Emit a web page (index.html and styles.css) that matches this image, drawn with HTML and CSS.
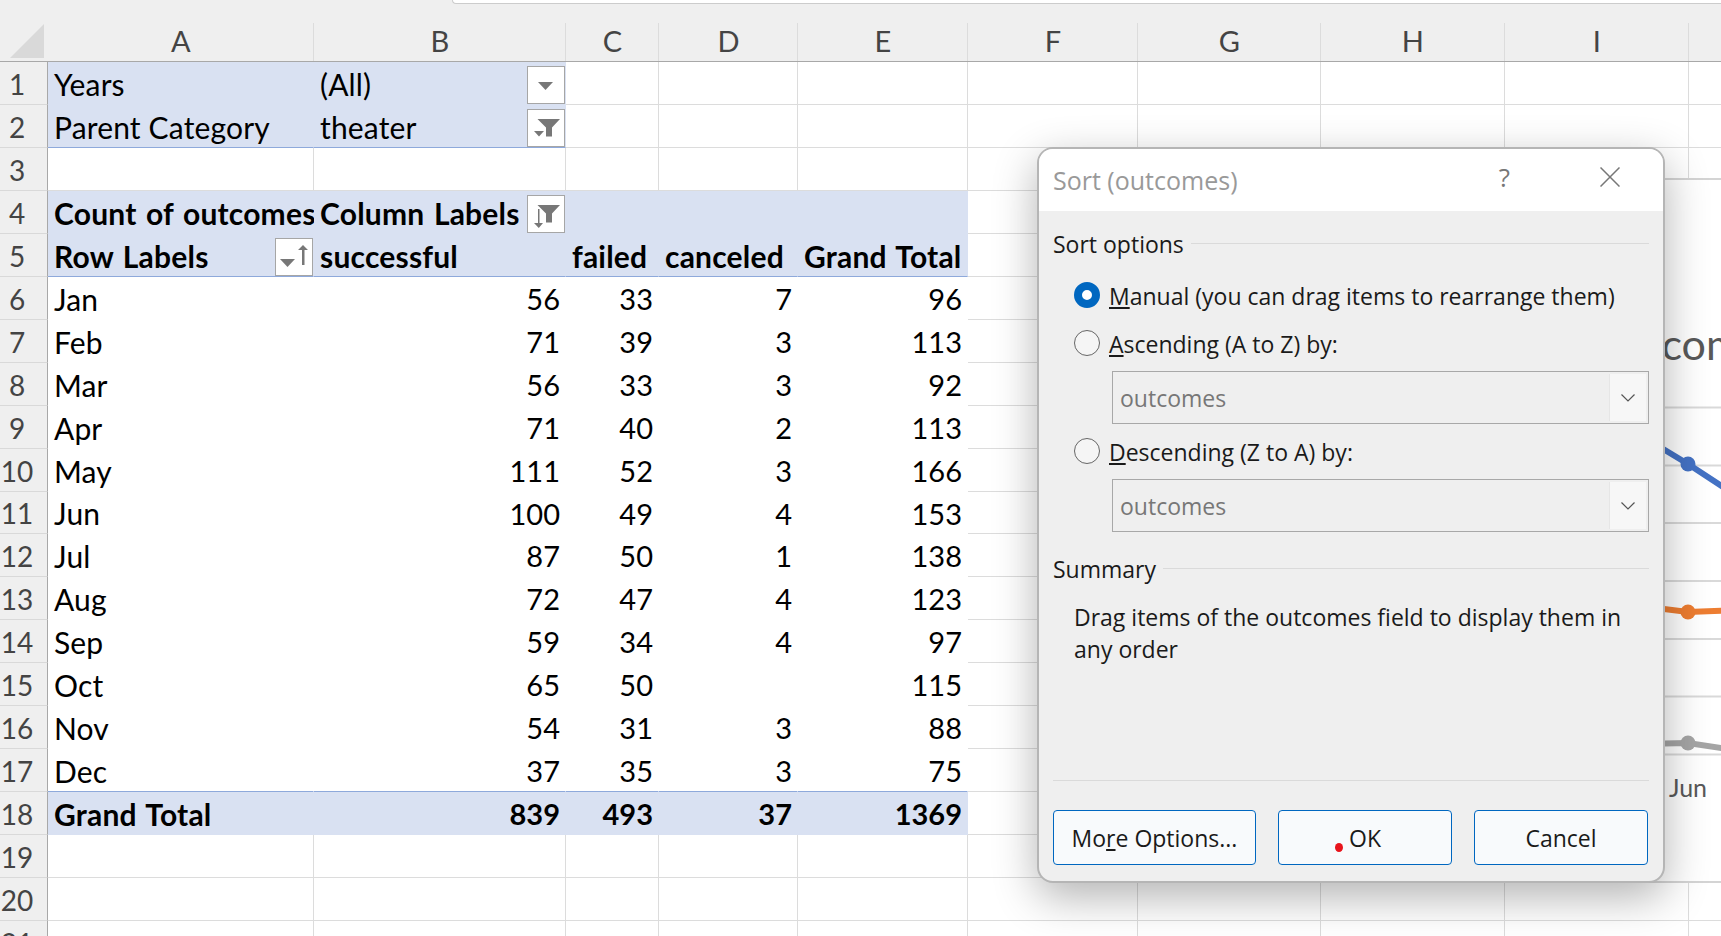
FILE: index.html
```html
<!DOCTYPE html>
<html>
<head>
    <meta charset="UTF-8">
    <title>Sort (outcomes)</title>
    <link rel="stylesheet" href="styles.css">
</head>
<body>
<div class="topbar"><div class="formula-edge"></div></div>

<table class="sheet">
    <colgroup>
        <col class="c-row"><col class="c-a"><col class="c-b"><col class="c-c"><col class="c-d"><col class="c-e">
        <col class="c-f"><col class="c-g"><col class="c-h"><col class="c-i"><col class="c-j">
    </colgroup>
    <thead>
    <tr>
        <th class="corner"><div class="corner-mark"></div></th>
        <th>A</th><th>B</th><th>C</th><th>D</th><th>E</th><th>F</th><th>G</th><th>H</th><th>I</th><th></th>
    </tr>
    </thead>
    <tbody>
    <tr>
        <th>1</th>
        <td class="pv">Years</td>
        <td class="pv has-btn">(All)
            <span class="fbtn">
                <svg width="36" height="36" viewBox="0 0 36 36"><path class="ico" d="M10 15h15l-7.500 8z"/></svg>
            </span>
        </td>
        <td></td><td></td><td></td><td></td><td></td><td></td><td></td><td></td>
    </tr>
    <tr>
        <th>2</th>
        <td class="pv line">Parent Category</td>
        <td class="pv line has-btn">theater
            <span class="fbtn">
                <svg width="36" height="36" viewBox="0 0 36 36"><path class="ico" d="M9.500 9H32l-8 8.500v9h-6v-9zM6 21h10l-5 5.500z"/></svg>
            </span>
        </td>
        <td></td><td></td><td></td><td></td><td></td><td></td><td></td><td></td>
    </tr>
    <tr>
        <th>3</th>
        <td></td><td></td><td></td><td></td><td></td><td></td><td></td><td></td><td></td><td></td>
    </tr>
    <tr>
        <th>4</th>
        <td class="pv b">Count of outcomes</td>
        <td class="pv b has-btn">Column Labels
            <span class="fbtn">
                <svg width="36" height="36" viewBox="0 0 36 36"><path class="ico" d="M9.500 9H32l-8 8.500v9h-6v-9z"/><path class="ico" d="M10 13h1.500v14H15l-4.200 5-4.800-5h4z"/></svg>
            </span>
        </td>
        <td class="pv"></td><td class="pv"></td><td class="pv"></td>
        <td></td><td></td><td></td><td></td><td></td>
    </tr>
    <tr>
        <th>5</th>
        <td class="pv line b has-btn">Row Labels
            <span class="fbtn">
                <svg width="36" height="36" viewBox="0 0 36 36"><path class="ico" d="M4 20h15l-7.500 8z"/><path class="ico" d="M26 26V11h-4l5-5 5 5h-3.500v15z"/></svg>
            </span>
        </td>
        <td class="pv line b">successful</td>
        <td class="pv line b">failed</td>
        <td class="pv line b">canceled</td>
        <td class="pv line b">Grand Total</td>
        <td></td><td></td><td></td><td></td><td></td>
    </tr>
    <tr><th>6</th><td class="pl">Jan</td><td class="pl num">56</td><td class="pl num">33</td><td class="pl num">7</td><td class="pl num">96</td><td></td><td></td><td></td><td></td><td></td></tr>
    <tr><th>7</th><td class="pl">Feb</td><td class="pl num">71</td><td class="pl num">39</td><td class="pl num">3</td><td class="pl num">113</td><td></td><td></td><td></td><td></td><td></td></tr>
    <tr><th>8</th><td class="pl">Mar</td><td class="pl num">56</td><td class="pl num">33</td><td class="pl num">3</td><td class="pl num">92</td><td></td><td></td><td></td><td></td><td></td></tr>
    <tr><th>9</th><td class="pl">Apr</td><td class="pl num">71</td><td class="pl num">40</td><td class="pl num">2</td><td class="pl num">113</td><td></td><td></td><td></td><td></td><td></td></tr>
    <tr><th>10</th><td class="pl">May</td><td class="pl num">111</td><td class="pl num">52</td><td class="pl num">3</td><td class="pl num">166</td><td></td><td></td><td></td><td></td><td></td></tr>
    <tr class="short"><th>11</th><td class="pl">Jun</td><td class="pl num">100</td><td class="pl num">49</td><td class="pl num">4</td><td class="pl num">153</td><td></td><td></td><td></td><td></td><td></td></tr>
    <tr><th>12</th><td class="pl">Jul</td><td class="pl num">87</td><td class="pl num">50</td><td class="pl num">1</td><td class="pl num">138</td><td></td><td></td><td></td><td></td><td></td></tr>
    <tr><th>13</th><td class="pl">Aug</td><td class="pl num">72</td><td class="pl num">47</td><td class="pl num">4</td><td class="pl num">123</td><td></td><td></td><td></td><td></td><td></td></tr>
    <tr><th>14</th><td class="pl">Sep</td><td class="pl num">59</td><td class="pl num">34</td><td class="pl num">4</td><td class="pl num">97</td><td></td><td></td><td></td><td></td><td></td></tr>
    <tr><th>15</th><td class="pl">Oct</td><td class="pl num">65</td><td class="pl num">50</td><td class="pl num"></td><td class="pl num">115</td><td></td><td></td><td></td><td></td><td></td></tr>
    <tr><th>16</th><td class="pl">Nov</td><td class="pl num">54</td><td class="pl num">31</td><td class="pl num">3</td><td class="pl num">88</td><td></td><td></td><td></td><td></td><td></td></tr>
    <tr><th>17</th><td class="pl last">Dec</td><td class="pl last num">37</td><td class="pl last num">35</td><td class="pl last num">3</td><td class="pl last num">75</td><td></td><td></td><td></td><td></td><td></td></tr>
    <tr><th>18</th><td class="pv b">Grand Total</td><td class="pv b num">839</td><td class="pv b num">493</td><td class="pv b num">37</td><td class="pv b num">1369</td><td></td><td></td><td></td><td></td><td></td></tr>
    <tr><th>19</th><td></td><td></td><td></td><td></td><td></td><td></td><td></td><td></td><td></td><td></td></tr>
    <tr><th>20</th><td></td><td></td><td></td><td></td><td></td><td></td><td></td><td></td><td></td><td></td></tr>
    <tr><th>21</th><td></td><td></td><td></td><td></td><td></td><td></td><td></td><td></td><td></td><td></td></tr>
    </tbody>
</table>

<!-- chart object floating on the sheet, mostly behind the dialog -->
<div class="chart">
    <svg class="chart-svg" width="600" height="705" viewBox="1230 178 600 705">
        <path class="grid" d="M1230 407.500H1830M1230 465.500H1830M1230 523H1830M1230 581H1830M1230 639H1830M1230 696.500H1830M1230 754.500H1830"/>
        <text class="chart-title" x="1588" y="360">Outcomes Based on Launch Date</text>
        <polyline class="ln blue" points="1640,435 1688,464 1740,498"/>
        <circle class="dot-blue" cx="1688" cy="464" r="7.500"/>
        <polyline class="ln orange" points="1640,606 1688,612 1740,610"/>
        <circle class="dot-orange" cx="1688" cy="612" r="7.500"/>
        <polyline class="ln grey" points="1640,744 1688,743 1740,751"/>
        <circle class="dot-grey" cx="1688" cy="743" r="7.500"/>
        <text class="chart-label" x="1688" y="797" text-anchor="middle">Jun</text>
    </svg>
</div>

<div class="dialog">
    <div class="dlg-title">
        <span class="dlg-name">Sort (outcomes)</span>
        <span class="dlg-help">?</span>
        <svg class="dlg-close" width="20" height="20" viewBox="0 0 20 20"><path d="M.5.5l19 19M19.500.5l-19 19"/></svg>
    </div>
    <div class="dlg-body">
        <div class="legend"><span>Sort options</span><i></i></div>
        <div class="radio-row"><span class="radio on"></span><span class="radio-text"><u>M</u>anual (you can drag items to rearrange them)</span></div>
        <div class="radio-row"><span class="radio"></span><span class="radio-text"><u>A</u>scending (A to Z) by:</span></div>
        <div class="combo">
            <span class="combo-text">outcomes</span>
            <span class="combo-btn"><svg width="14" height="8" viewBox="0 0 14 8"><path d="M.5.5L7 7l6.500-6.500"/></svg></span>
        </div>
        <div class="radio-row"><span class="radio"></span><span class="radio-text"><u>D</u>escending (Z to A) by:</span></div>
        <div class="combo">
            <span class="combo-text">outcomes</span>
            <span class="combo-btn"><svg width="14" height="8" viewBox="0 0 14 8"><path d="M.5.5L7 7l6.500-6.500"/></svg></span>
        </div>
        <div class="legend legend-sum"><span>Summary</span><i></i></div>
        <p class="summary">Drag items of the outcomes field to display them in any order</p>
        <div class="dlg-foot">
            <button class="btn btn-more">Mo<u>r</u>e Options...</button>
            <button class="btn btn-ok"><span class="red-dot"></span>OK</button>
            <button class="btn btn-cancel">Cancel</button>
        </div>
    </div>
</div>
</body>
</html>
```

FILE: styles.css
```css
*{
    box-sizing:border-box;
}

html,body{
    margin:0;
    height:936px;
    overflow:hidden;
    background:#fff;
}

body{
    position:relative;
    width:1721px;
    font-family:"Lato","Liberation Sans",sans-serif;
}

.topbar{
    height:4px;
    background:#efefef;
    padding-left:452px;
}

.formula-edge{
    height:4px;
    background:#fff;
    border-bottom:1px solid #ccc;
    border-left:1px solid #ccc;
    border-bottom-left-radius:4px;
}

/* sheet */
.sheet{
    table-layout:fixed;
    border-collapse:separate;
    border-spacing:0;
    width:1780px;
    font-size:30px;
    letter-spacing:.15px;
    color:#000;
}

.c-row{width:48px;}
.c-a{width:266px;}
.c-b{width:252px;}
.c-c{width:93px;}
.c-d{width:139px;}
.c-e{width:170px;}
.c-f{width:170px;}
.c-g{width:183px;}
.c-h{width:184px;}
.c-i{width:184px;}
.c-j{width:91px;}

.sheet thead th{
    height:58px;
    padding:15px 0 0;
    background:#efefef linear-gradient(#dcdcdc,#dcdcdc) no-repeat right bottom/1px 38px;
    border-bottom:1px solid #a8a8a8;
    font-weight:normal;
    font-size:29px;
    color:#444;
    text-align:center;
}

.sheet thead th.corner{
    padding:0;
    background:#efefef;
    position:relative;
}

.corner-mark{
    position:absolute;
    left:10px;
    top:20px;
    width:34px;
    height:34px;
    background:#d9d9d9;
    clip-path:polygon(100% 0,100% 100%,0 100%);
}

.sheet tbody th{
    height:43px;
    padding:2px 13px 0 0;
    background:#efefef;
    border-bottom:1px solid #d9d9d9;
    border-right:1px solid #a8a8a8;
    font-weight:normal;
    font-size:28px;
    letter-spacing:0;
    color:#444;
    text-align:center;
}

.sheet td{
    height:43px;
    padding:2px 6px 0;
    border-bottom:1px solid #dcdcdc;
    border-right:1px solid #dcdcdc;
    white-space:nowrap;
    line-height:40px;
}

.sheet .short th,
.sheet .short td{
    height:42px;
    line-height:39px;
}

.sheet td.pv{
    background:#d9e1f2;
    border-color:#d9e1f2;
}

.sheet td.line{
    border-bottom-color:#8ea9db;
}

.sheet td.pl{
    border-right-color:#fff;
    border-bottom-color:#fff;
}

.sheet td.last{
    border-bottom-color:#8ea9db;
}

.b{
    font-weight:bold;
    letter-spacing:.2px;
    word-spacing:2px;
}

.sheet td.num{
    text-align:right;
    font-size:29px;
    letter-spacing:0;
    padding-right:5px;
}

.has-btn{
    position:relative;
}

.fbtn{
    position:absolute;
    right:0;
    bottom:0;
    width:38px;
    height:38px;
    background:#fff;
    border:1px solid #a6a6a6;
}

.fbtn svg{
    display:block;
}

.ico{
    fill:#777;
}

/* chart */
.chart{
    position:absolute;
    left:1230px;
    top:178px;
    width:600px;
    height:705px;
    background:#fff;
    border-top:2px solid #d4d4d4;
    border-bottom:2px solid #d4d4d4;
}

.chart-svg{
    position:absolute;
    left:0;
    top:-2px;
}

.grid{
    fill:none;
    stroke:#d9d9d9;
    stroke-width:2;
}

.chart-title{
    font-size:43px;
    fill:#595959;
}

.chart-label{
    font-size:25px;
    fill:#595959;
}

.ln{
    fill:none;
    stroke-width:6;
}

.blue{stroke:#4472c4;}
.orange{stroke:#ed7d31;}
.grey{stroke:#a5a5a5;}
.dot-blue{fill:#4472c4;}
.dot-orange{fill:#ed7d31;}
.dot-grey{fill:#a5a5a5;}

/* dialog */
.dialog{
    position:absolute;
    left:1037px;
    top:147px;
    width:628px;
    height:736px;
    display:flex;
    flex-direction:column;
    border:2px solid #b5b5b5;
    border-radius:16px;
    background:#efefef;
    box-shadow:0 14px 44px rgba(0,0,0,.3);
    overflow:hidden;
    font-family:"Open Sans","Liberation Sans",sans-serif;
    font-size:23px;
    color:#1a1a1a;
}

.dlg-title{
    height:62px;
    flex:none;
    display:flex;
    align-items:center;
    background:#fff;
    padding:0 43px 0 14px;
    color:#999;
    font-size:25px;
}

.dlg-name{
    flex:1;
}

.dlg-help{
    margin-right:90px;
    color:#777;
    font-size:26px;
    margin-top:-6px;
}

.dlg-close{
    margin-top:-6px;
}

.dlg-close path{
    fill:none;
    stroke:#777;
    stroke-width:1.500;
}

.dlg-body{
    flex:1;
    display:flex;
    flex-direction:column;
    padding:18px 14px 16px;
}

.legend{
    height:30px;
    display:flex;
    align-items:center;
    gap:7px;
}

.legend i{
    flex:1;
    height:1px;
    background:#dadada;
    margin-top:-2px;
}

.legend-sum{
    margin-top:22px;
}

.radio-row{
    height:48px;
    display:flex;
    align-items:center;
    gap:9px;
    padding-left:21px;
}

.radio-text{
    padding-top:2px;
}

.legend + .radio-row{
    margin-top:12px;
}

.radio{
    width:26px;
    height:26px;
    flex:none;
    border-radius:50%;
    border:1.500px solid #666;
    background:#f5f5f5;
}

.radio.on{
    border:8px solid #0067c0;
    background:#fff;
}

.combo{
    height:53px;
    margin:4px 0 0 59px;
    display:flex;
    align-items:center;
    justify-content:space-between;
    padding:2px 2px 2px 7px;
    border:1px solid #a8a8a8;
    color:#777;
}

.combo-text{
    padding-top:1px;
}

.combo + .radio-row{
    margin-top:3px;
}

.combo-btn{
    width:37px;
    height:47px;
    display:flex;
    align-items:center;
    justify-content:center;
    background:#f7f7f7;
    border-left:1px solid #e6e6e6;
}

.combo-btn path{
    fill:none;
    stroke:#555;
    stroke-width:1.200;
}

.summary{
    margin:17px 0 0;
    padding:0 0 0 21px;
    line-height:32px;
}

.dlg-foot{
    margin-top:auto;
    display:flex;
    justify-content:space-between;
    padding:29px 1px 0 0;
    border-top:1px solid #dadada;
}

.btn{
    position:relative;
    height:55px;
    padding:0;
    border:1.500px solid #0067c0;
    border-radius:4px;
    background:#f8fafc;
    color:#1a1a1a;
    font:inherit;
}

.btn-more{width:203px;}
.btn-ok{width:174px;}
.btn-cancel{width:174px;}

.red-dot{
    position:absolute;
    left:56px;
    top:32px;
    width:8px;
    height:9px;
    border-radius:50%;
    background:#e8141c;
}
```
